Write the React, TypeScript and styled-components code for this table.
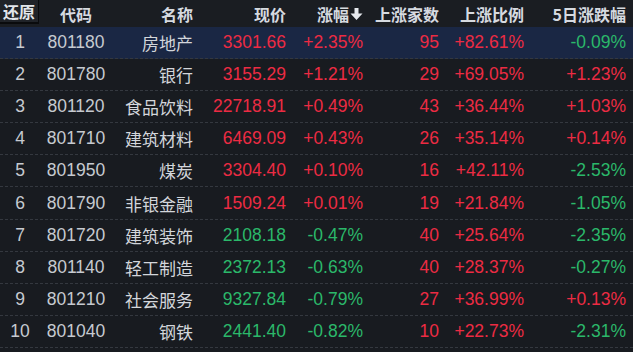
import React from "react";
import styled, { createGlobalStyle } from "styled-components";

const Global = createGlobalStyle`
  html, body { margin: 0; padding: 0; background: #181b20; overflow: hidden; }
  #root { width: 633px; height: 352px; }
`;

const COLS = "40px 72px 81px 93px 77px 76px 85px 102px 1fr";

const Table = styled.div`
  width: 633px;
  height: 352px;
  background: #181b20;
  font-family: "Liberation Sans", "Noto Sans CJK SC", sans-serif;
  display: flex;
  flex-direction: column;
  overflow: hidden;
`;

const HeaderRow = styled.div`
  display: grid;
  grid-template-columns: ${COLS};
  height: 27px;
  background: #1a1d22;
  align-items: center;
  color: #d6dae0;
  font-size: 16px;
  font-weight: bold;
  font-family: "Noto Sans CJK SC", "Liberation Sans", sans-serif;
`;

const HCell = styled.div<{ $align?: string }>`
  text-align: ${(p) => p.$align || "right"};
  white-space: nowrap;
  display: flex;
  align-items: center;
  justify-content: ${(p) =>
    p.$align === "center" ? "center" : p.$align === "left" ? "flex-start" : "flex-end"};
  line-height: 20px;
`;

const ResetButton = styled.div`
  height: 24px;
  box-sizing: border-box;
  align-self: start;
  background: #202328;
  border-bottom: 2px solid #0a0b0d;
  border-right: 1px solid #0a0b0d;
  display: flex;
  align-items: center;
  justify-content: center;
  width: 39px;
  font-size: 16px;
  color: #e2e5ea;
`;

const Row = styled.div<{ $selected?: boolean }>`
  display: grid;
  grid-template-columns: ${COLS};
  height: 32.1px;
  box-sizing: border-box;
  align-items: center;
  background: ${(p) => (p.$selected ? "#1a2744" : "transparent")};
  border-bottom: 1px dashed #34383f;
  font-size: 17.5px;
`;

const Cell = styled.div<{ $align?: string; $color?: string }>`
  text-align: ${(p) => p.$align || "right"};
  color: ${(p) => p.$color || "#c6cad0"};
  white-space: nowrap;
`;

const NameCell = styled(Cell)`
  font-family: "Noto Sans CJK SC", sans-serif;
  font-size: 17px;
  color: #d3d6db;
`;

const RED = "#ec2b43";
const GREEN = "#2bb86a";

const col = (s: string) => (s.startsWith("-") ? GREEN : RED);

const data = [
  ["801180", "房地产", "3301.66", "+2.35%", "95", "+82.61%", "-0.09%"],
  ["801780", "银行", "3155.29", "+1.21%", "29", "+69.05%", "+1.23%"],
  ["801120", "食品饮料", "22718.91", "+0.49%", "43", "+36.44%", "+1.03%"],
  ["801710", "建筑材料", "6469.09", "+0.43%", "26", "+35.14%", "+0.14%"],
  ["801950", "煤炭", "3304.40", "+0.10%", "16", "+42.11%", "-2.53%"],
  ["801790", "非银金融", "1509.24", "+0.01%", "19", "+21.84%", "-1.05%"],
  ["801720", "建筑装饰", "2108.18", "-0.47%", "40", "+25.64%", "-2.35%"],
  ["801140", "轻工制造", "2372.13", "-0.63%", "40", "+28.37%", "-0.27%"],
  ["801210", "社会服务", "9327.84", "-0.79%", "27", "+36.99%", "+0.13%"],
  ["801040", "钢铁", "2441.40", "-0.82%", "10", "+22.73%", "-2.31%"],
];

const SortArrow = () => (
  <svg width="13" height="14" viewBox="0 0 13 14" style={{ marginLeft: 1 }}>
    <path d="M4.5 1 H8.5 V6.5 H12.5 L6.5 13 L0.5 6.5 H4.5 Z" fill="#e6e9ee" />
  </svg>
);

export default function App() {
  return (
    <>
      <Global />
      <Table>
        <HeaderRow>
          <ResetButton>还原</ResetButton>
          <HCell $align="center">代码</HCell>
          <HCell>名称</HCell>
          <HCell>现价</HCell>
          <HCell>
            涨幅
            <SortArrow />
          </HCell>
          <HCell>上涨家数</HCell>
          <HCell>上涨比例</HCell>
          <HCell>5日涨跌幅</HCell>
          <div />
        </HeaderRow>
        {data.map((d, i) => (
          <Row key={d[0]} $selected={i === 0}>
            <Cell $align="center">{i + 1}</Cell>
            <Cell $align="center">{d[0]}</Cell>
            <NameCell>{d[1]}</NameCell>
            <Cell $color={col(d[3])}>{d[2]}</Cell>
            <Cell $color={col(d[3])}>{d[3]}</Cell>
            <Cell $color={RED}>{d[4]}</Cell>
            <Cell $color={RED}>{d[5]}</Cell>
            <Cell $color={col(d[6])}>{d[6]}</Cell>
            <div />
          </Row>
        ))}
      </Table>
    </>
  );
}
